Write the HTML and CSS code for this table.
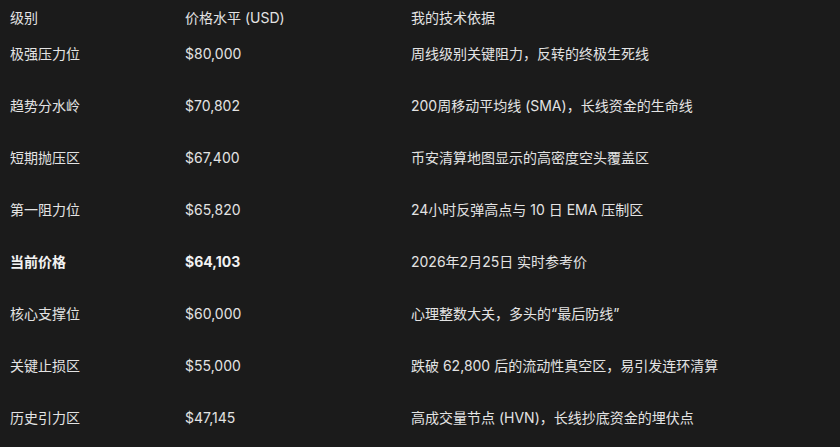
FILE: index.html
```html
<!DOCTYPE html>
<html lang="zh-CN">
<head>
<meta charset="utf-8">
<title>价格水平</title>
<link rel="stylesheet" href="styles.css">
</head>
<body>
<table class="levels">
  <colgroup>
    <col class="c1">
    <col class="c2">
    <col class="c3">
  </colgroup>
  <thead>
    <tr>
      <th>级别</th>
      <th>价格水平 (USD)</th>
      <th>我的技术依据</th>
    </tr>
  </thead>
  <tbody>
    <tr><td>极强压力位</td><td>$80,000</td><td>周线级别关键阻力，反转的终极生死线</td></tr>
    <tr><td>趋势分水岭</td><td>$70,802</td><td>200周移动平均线 (SMA)，长线资金的生命线</td></tr>
    <tr><td>短期抛压区</td><td>$67,400</td><td>币安清算地图显示的高密度空头覆盖区</td></tr>
    <tr><td>第一阻力位</td><td>$65,820</td><td>24小时反弹高点与 10 日 EMA 压制区</td></tr>
    <tr class="current"><td>当前价格</td><td>$64,103</td><td class="normal">2026年2月25日 实时参考价</td></tr>
    <tr><td>核心支撑位</td><td>$60,000</td><td>心理整数大关，多头的“最后防线”</td></tr>
    <tr><td>关键止损区</td><td>$55,000</td><td>跌破 62,800 后的流动性真空区，易引发连环清算</td></tr>
    <tr><td>历史引力区</td><td>$47,145</td><td>高成交量节点 (HVN)，长线抄底资金的埋伏点</td></tr>
  </tbody>
</table>
</body>
</html>
```
FILE: styles.css
```css
html, body {
  margin: 0;
  padding: 0;
  background: #1b1b1b;
}
body {
  width: 840px;
  height: 447px;
  overflow: hidden;
  font-family: Inter, "Noto Sans CJK SC", sans-serif;
  font-size: 14px;
  color: #e3e3e3;
}
.levels {
  border-collapse: collapse;
  table-layout: fixed;
  width: 840px;
}
.levels .c1 { width: 175px; }
.levels .c2 { width: 226px; }
.levels th,
.levels td {
  text-align: left;
  padding: 0 0 0 10px;
  white-space: nowrap;
  box-sizing: border-box;
}
.levels th {
  font-weight: 400;
  line-height: 18px;
  height: 27px;
  padding-top: 9px;
  vertical-align: top;
}
.levels td {
  height: 52px;
  line-height: 20px;
  padding-top: 2px;
  vertical-align: middle;
}
.levels .current td {
  font-weight: 700;
  color: #f2f2f2;
}
.levels .current td.normal {
  font-weight: 400;
  color: #e3e3e3;
}
```
